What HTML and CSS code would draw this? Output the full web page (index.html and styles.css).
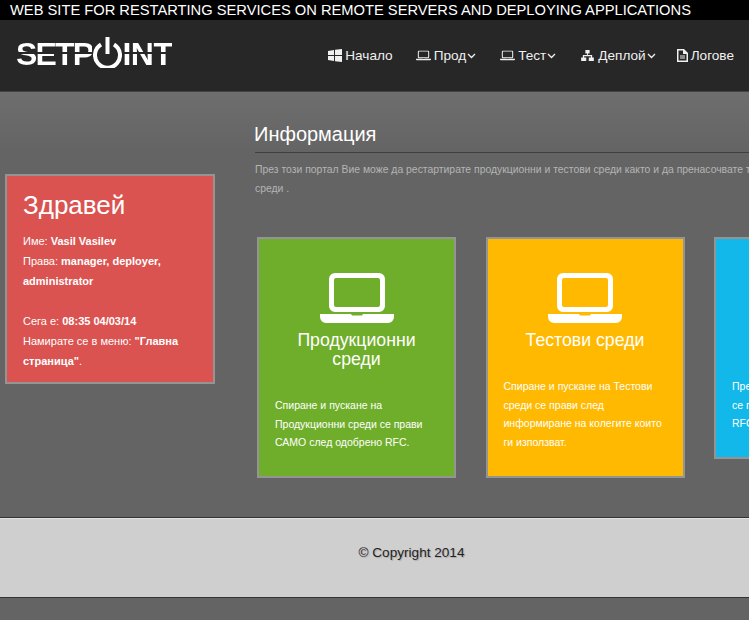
FILE: index.html
```html
<!DOCTYPE html>
<html lang="bg">
<head>
<meta charset="utf-8">
<title>Setpoint</title>
<link rel="stylesheet" href="styles.css">
</head>
<body>
<svg class="defs" width="0" height="0" aria-hidden="true">
  <symbol id="laptop" viewBox="0 0 74 50">
    <path fill-rule="evenodd" d="M15 0h44a6 6 0 0 1 6 6v27a6 6 0 0 1-6 6H15a6 6 0 0 1-6-6V6a6 6 0 0 1 6-6zm1 5a2 2 0 0 0-2 2v25a2 2 0 0 0 2 2h42a2 2 0 0 0 2-2V7a2 2 0 0 0-2-2z"/>
    <path d="M0 41h31l1 1.500h10l1-1.500h31v3a6 6 0 0 1-6 6H6a6 6 0 0 1-6-6z"/>
  </symbol>
  <symbol id="chev" viewBox="0 0 9 6">
    <path d="M1 1l3.500 3.500L8 1" fill="none" stroke="currentColor" stroke-width="1.300"/>
  </symbol>
</svg>
<div class="banner">WEB SITE FOR RESTARTING SERVICES ON REMOTE SERVERS AND DEPLOYING APPLICATIONS</div>
<header class="nav">
  <a class="logo"><span class="logo-a">SETP</span><svg class="power" viewBox="0 0 29 31"><path d="M8 7.500a12.500 12.500 0 1 0 13 0" fill="none" stroke="#fff" stroke-width="4"/><rect x="12.500" y="0" width="4" height="17" fill="#fff"/></svg><span class="logo-b">INT</span></a>
  <nav class="menu">
    <a class="item first"><svg class="ico win" viewBox="0 0 14 13"><path d="M0 2l6-1v5H0zM7 .8L14 0v6H7zM0 7h6v5l-6-1zM7 7h7v6l-7-.8z"/></svg>Начало</a>
    <a class="item"><svg class="ico" viewBox="0 0 74 50"><use href="#laptop"/></svg>Прод<svg class="chev"><use href="#chev"/></svg></a>
    <a class="item"><svg class="ico" viewBox="0 0 74 50"><use href="#laptop"/></svg>Тест<svg class="chev"><use href="#chev"/></svg></a>
    <a class="item"><svg class="ico" viewBox="0 0 15 13"><path d="M5 0h5v4H8v2h5v3h2v4H9V9h2.500V7.500h-8V9H6v4H0V9h2V6h5V4H5z"/></svg>Деплой<svg class="chev"><use href="#chev"/></svg></a>
    <a class="item last"><svg class="ico doc" viewBox="0 0 11 13"><path fill-rule="evenodd" d="M0 0h7l4 4v9H0zm1.500 1.500v10h8V5H6V1.500zM3 6.500h5v1H3zM3 8.500h5v1H3z"/></svg>Логове</a>
  </nav>
</header>
<main class="main">
  <aside class="hello">
    <h2>Здравей</h2>
    <p>Име: <b>Vasil Vasilev</b><br>Права: <b>manager, deployer, administrator</b><br><br>Сега е: <b>08:35 04/03/14</b><br>Намирате се в меню: <b>"Главна страница"</b>.</p>
  </aside>
  <section class="content">
    <h1>Информация</h1>
    <p class="intro">През този портал Вие може да рестартирате продукционни и тестови среди както и да пренасочвате трафика между среди .</p>
    <div class="cards">
      <article class="card green">
        <svg class="big"><use href="#laptop"/></svg>
        <h3>Продукционни среди</h3>
        <p>Спиране и пускане на Продукционни среди се прави САМО след одобрено RFC.</p>
      </article>
      <article class="card yellow">
        <svg class="big"><use href="#laptop"/></svg>
        <h3>Тестови среди</h3>
        <p>Спиране и пускане на Тестови среди се прави след информиране на колегите които ги използват.</p>
      </article>
      <article class="card blue">
        <svg class="big"><use href="#laptop"/></svg>
        <h3>Деплой</h3>
        <p>Пренасочването на потребители се прави само след одобрено RFC.</p>
      </article>
    </div>
  </section>
</main>
<footer class="foot">© Copyright 2014</footer>
</body>
</html>
```
FILE: styles.css
```css
* { box-sizing: border-box; }
html, body { height: 100%; }
body {
  margin: 0;
  overflow: hidden;
  background: #646464;
  color: #fff;
  font-family: "Liberation Sans", Arial, sans-serif;
}
.defs { position: absolute; }
svg { fill: currentColor; }
.banner {
  height: 20px;
  padding-left: 10px;
  background: #000;
  font-size: 14.700px;
  line-height: 20px;
  white-space: nowrap;
}
.nav {
  height: 72px;
  display: flex;
  align-items: center;
  justify-content: space-between;
  padding: 0 15px 0 16px;
  background: #272727;
  border-bottom: 1px solid #444;
}
.logo {
  display: flex;
  align-items: flex-end;
  margin-top: -8px;
  font-size: 32px;
  line-height: 26px;
  font-weight: 700;
}
.logo-a, .logo-b {
  color: transparent;
  background: linear-gradient(#fff 44%, #272727 44%, #272727 50%, #fff 50%);
  -webkit-background-clip: text;
  background-clip: text;
}
.logo-a { letter-spacing: -1.800px; }
.logo-b { letter-spacing: -0.500px; }
.power { width: 29px; height: 31px; margin: 0 0 -1px 1px; flex: none; }
.menu { display: flex; gap: 24px; }
.item {
  display: flex;
  align-items: center;
  font-size: 13.600px;
  color: #f0f0f0;
  height: 16px;
}
.first { margin-right: -1px; }
.last { margin-left: -3px; }
.ico { width: 15px; height: 11px; margin-right: 3px; flex: none; }
.win { width: 14px; height: 13px; }
.doc { width: 11px; height: 13px; }
.chev { width: 9px; height: 6px; margin-left: 1px; margin-top: 1px; flex: none; }
.main {
  display: flex;
  align-items: flex-start;
  height: 426px;
  padding-left: 5px;
  background: linear-gradient(#6e6e6e, #646464 60px);
  border-bottom: 1px solid #333;
}
.hello {
  width: 210px;
  height: 210px;
  flex: none;
  margin-top: 82px;
  padding: 13px 16px;
  background: #da5350;
  border: 2px solid #949494;
}
.hello h2 {
  margin: 0 0 10px;
  font-size: 26px;
  line-height: 32px;
  font-weight: 400;
}
.hello p { margin: 0; font-size: 11px; line-height: 20px; }
.content { width: 640px; flex: none; margin-left: 40px; padding-top: 29px; }
.content h1 {
  margin: 0;
  height: 32px;
  font-size: 20px;
  line-height: 26px;
  font-weight: 400;
  text-indent: -1px;
  border-bottom: 1px solid #404040;
}
.intro {
  margin: 7px 0 0;
  font-size: 10.400px;
  line-height: 19px;
  color: #b4b4b4;
  width: 590px;
}
.cards {
  display: flex;
  align-items: flex-start;
  gap: 29.500px;
  margin-top: 39px;
  padding-left: 2px;
}
.card {
  width: 199px;
  flex: none;
  padding: 34px 16px 24.500px;
  border: 2px solid #949494;
  text-align: center;
}
.big { display: block; width: 74px; height: 50px; margin: 0 auto 8px; }
.card h3 { margin: 0 0 27px; font-size: 17.700px; line-height: 19px; font-weight: 400; }
.card p { margin: 0; font-size: 10.500px; line-height: 18.500px; text-align: left; }
.green { background: #6fae2a; }
.yellow { background: #ffb900; }
.blue { background: #12b8ea; }
.foot {
  height: 80px;
  background: #cfcfcf;
  border-top: 1px solid #e4e4e4;
  border-bottom: 1px solid #333;
  color: #222;
  font-size: 13.600px;
  line-height: 68px;
  text-align: center;
  padding-left: 74px;
  text-shadow: 1px 1px 1px #aaa;
}
```
